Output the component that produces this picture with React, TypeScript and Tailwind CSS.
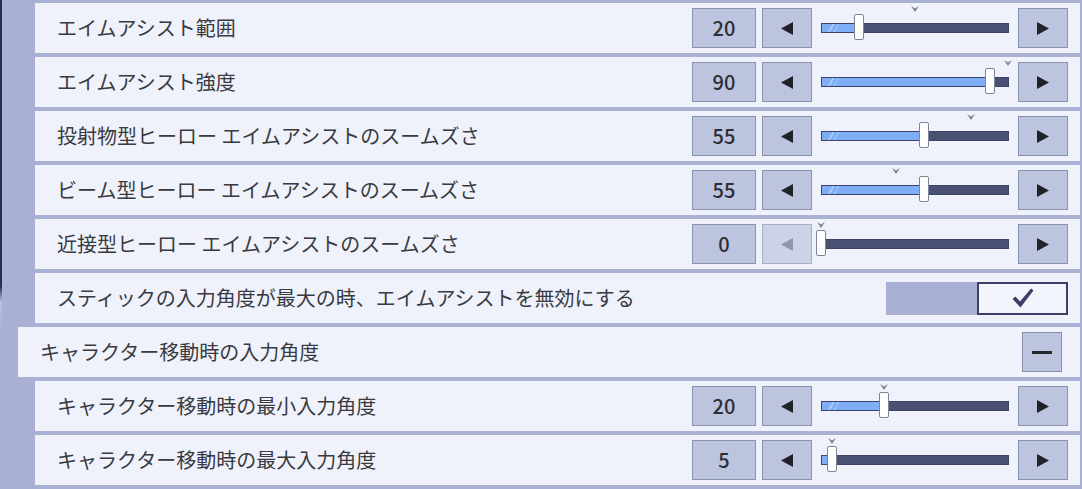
import React from 'react';

type SliderRow = {
  kind: 'slider';
  label: string;
  value: number;
  pos: number;
  marker: number;
  minDisabled?: boolean;
};
type ToggleRow = { kind: 'toggle'; label: string; on: boolean };
type HeaderRow = { kind: 'header'; label: string };
type Row = SliderRow | ToggleRow | HeaderRow;

const rows: Row[] = [
  { kind: 'slider', label: 'エイムアシスト範囲', value: 20, pos: 0.2, marker: 0.5 },
  { kind: 'slider', label: 'エイムアシスト強度', value: 90, pos: 0.9, marker: 0.995 },
  { kind: 'slider', label: '投射物型ヒーロー エイムアシストのスームズさ', value: 55, pos: 0.55, marker: 0.8 },
  { kind: 'slider', label: 'ビーム型ヒーロー エイムアシストのスームズさ', value: 55, pos: 0.55, marker: 0.4 },
  { kind: 'slider', label: '近接型ヒーロー エイムアシストのスームズさ', value: 0, pos: 0, marker: 0, minDisabled: true },
  { kind: 'toggle', label: 'スティックの入力角度が最大の時、エイムアシストを無効にする', on: true },
  { kind: 'header', label: 'キャラクター移動時の入力角度' },
  { kind: 'slider', label: 'キャラクター移動時の最小入力角度', value: 20, pos: 0.333, marker: 0.333 },
  { kind: 'slider', label: 'キャラクター移動時の最大入力角度', value: 5, pos: 0.057, marker: 0.057 },
];

const font = "font-['Noto_Sans_CJK_JP','Noto_Sans',sans-serif]";

function Arrow({ dir, disabled }: { dir: 'left' | 'right'; disabled?: boolean }) {
  return (
    <div
      className={`flex h-10 w-[50px] items-center justify-center border ${
        disabled ? 'border-[#a7aec6] bg-[#ccd3e8]' : 'border-[#8a93ad] bg-[#bcc4df]'
      }`}
    >
      <svg width="12" height="13" viewBox="0 0 12 13">
        {dir === 'left' ? (
          <polygon points="12,0 12,13 0,6.5" fill={disabled ? '#9198ad' : '#202228'} />
        ) : (
          <polygon points="0,0 0,13 12,6.5" fill="#202228" />
        )}
      </svg>
    </div>
  );
}

function Slider({ pos, marker }: { pos: number; marker: number }) {
  return (
    <div className="relative mx-[9px] h-10 w-[188px]">
      <div className="absolute left-0 right-0 top-[15px] flex h-[10px] border border-[#3c4268] bg-[#4b5172]">
        <div
          className="h-full bg-[linear-gradient(120deg,#7eaef5_9px,#a6c8fa_9px,#a6c8fa_11px,#7eaef5_11px,#7eaef5_14px,#a6c8fa_14px,#a6c8fa_15px,#7eaef5_15px)]"
          style={{ width: `${pos * 100}%` }}
        />
      </div>
      <svg
        className="absolute top-[-2px]"
        style={{ left: `calc(${marker * 100}% - 4px)` }}
        width="8"
        height="6"
        viewBox="0 0 8 6"
      >
        <polygon points="0,0 4,2.5 8,0 4,6" fill="#7c8398" />
      </svg>
      <div
        className="absolute top-[6px] h-[26px] w-[10px] rounded-[2px] border border-[#7f8596] bg-white"
        style={{ left: `calc(${pos * 100}% - 5px)` }}
      />
    </div>
  );
}

export default function App() {
  return (
    <div className={`flex h-[489px] w-[1082px] overflow-hidden bg-[#a9b0d4] ${font}`}>
      <div className="h-full w-[2px] bg-[linear-gradient(to_bottom,#262b5c_0,#262b5c_286px,#b9c1e8_302px,#a9b0d4_330px)]" />
      <div className="flex flex-1 flex-col gap-1 pt-[3px]">
        {rows.map((row, i) => {
          if (row.kind === 'header') {
            return (
              <div key={i} className="ml-4 mr-[2px] flex h-[50px] items-center bg-[#eff2fb] pl-[22px] pr-[18px]">
                <span className="flex-1 text-[20px] text-[#393a3f]">{row.label}</span>
                <div className="flex h-10 w-10 items-center justify-center border border-[#8a93ad] bg-[#bcc4df]">
                  <div className="h-[3px] w-5 bg-[#262830]" />
                </div>
              </div>
            );
          }
          return (
            <div key={i} className="ml-[33px] mr-[2px] flex h-[50px] items-center bg-[#eff2fb] pl-[22px] pr-3">
              <span className="flex-1 text-[20px] text-[#393a3f]">{row.label}</span>
              {row.kind === 'slider' ? (
                <div className="flex items-center">
                  <div className="mr-[6px] flex h-10 w-16 items-center justify-center border border-[#8a93ad] bg-[#bcc4df] text-[20px] font-medium text-[#2c2e35]">
                    {row.value}
                  </div>
                  <Arrow dir="left" disabled={row.minDisabled} />
                  <Slider pos={row.pos} marker={row.marker} />
                  <Arrow dir="right" />
                </div>
              ) : (
                <div className="flex h-[33px] w-[182px]">
                  <div className="h-full w-[91px] bg-[#a9b0d4]" />
                  <div className="flex h-full w-[91px] items-center justify-center border-2 border-[#3a4068] bg-[#f3f5fd]">
                    <svg width="22" height="20" viewBox="0 0 22 20">
                      <path d="M0.5 11 L3.5 8.5 L8 13.5 L19 0.5 L21.5 2.5 L8.5 19.5 Z" fill="#3a4068" />
                    </svg>
                  </div>
                </div>
              )}
            </div>
          );
        })}
      </div>
    </div>
  );
}
